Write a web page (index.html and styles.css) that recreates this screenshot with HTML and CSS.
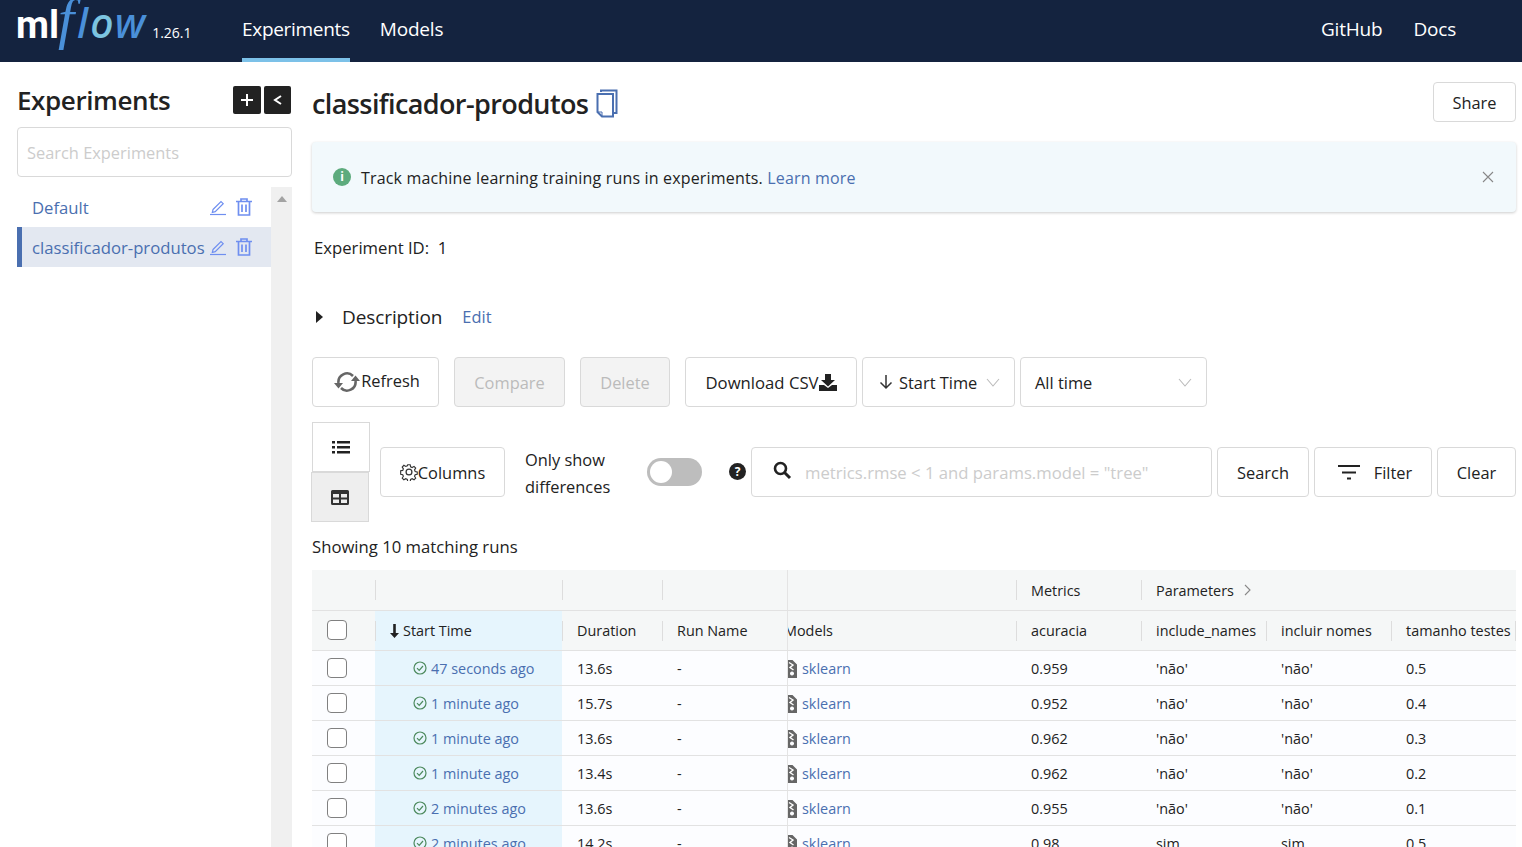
FILE: index.html
```html
<!DOCTYPE html>
<html lang="en">
<head>
    <meta charset="UTF-8">
    <title>MLflow Experiments</title>
    <link rel="stylesheet" href="styles.css">
</head>
<body>
    <header class="topbar">
        <div class="logo">
            <span class="logo-ml">ml</span><span class="logo-f">f</span><span class="logo-low">l<span class="logo-o">o</span>w</span>
            <span class="logo-version">1.26.1</span>
        </div>
        <nav class="nav-left">
            <a class="nav-link active">Experiments</a>
            <a class="nav-link">Models</a>
        </nav>
        <nav class="nav-right">
            <a class="nav-link">GitHub</a>
            <a class="nav-link">Docs</a>
        </nav>
    </header>

    <div class="page">
        <aside class="sidebar">
            <div class="side-head">
                <h2>Experiments</h2>
                <div class="side-btns">
                    <span class="dark-btn">
                        <svg width="14" height="14" viewBox="0 0 14 14"><path d="M7 1v12M1 7h12" stroke="#fff" stroke-width="2"/></svg>
                    </span>
                    <span class="dark-btn">
                        <svg width="12" height="12" viewBox="0 0 12 12"><path d="M9 2 3 6l6 4" stroke="#fff" stroke-width="2" fill="none"/></svg>
                    </span>
                </div>
            </div>
            <div class="side-search">Search Experiments</div>
            <div class="side-body">
                <ul class="exp-list">
                    <li class="exp-item">
                        <span class="exp-name">Default</span>
                        <svg class="exp-icon" width="16" height="18" viewBox="0 0 16 18"><path d="M3 11.500 11 3.500l2.200 2.200-8 8-2.900.700z" fill="none" stroke="#6f8ff0" stroke-width="1.200"/><path d="M0 16.500h16" stroke="#6f8ff0" stroke-width="1.200"/></svg>
                        <svg class="exp-icon" width="16" height="18" viewBox="0 0 16 18"><path d="M0 3.500h16M5 3.500V1h6v2.500M2.500 3.500V17h11V3.500M6 6.500v7.500M10 6.500v7.500" fill="none" stroke="#6f8ff0" stroke-width="1.700"/></svg>
                    </li>
                    <li class="exp-item selected">
                        <span class="exp-name">classificador-produtos</span>
                        <svg class="exp-icon" width="16" height="18" viewBox="0 0 16 18"><path d="M3 11.500 11 3.500l2.200 2.200-8 8-2.900.700z" fill="none" stroke="#6f8ff0" stroke-width="1.200"/><path d="M0 16.500h16" stroke="#6f8ff0" stroke-width="1.200"/></svg>
                        <svg class="exp-icon" width="16" height="18" viewBox="0 0 16 18"><path d="M0 3.500h16M5 3.500V1h6v2.500M2.500 3.500V17h11V3.500M6 6.500v7.500M10 6.500v7.500" fill="none" stroke="#6f8ff0" stroke-width="1.700"/></svg>
                    </li>
                </ul>
                <div class="scroll-track"><span class="scroll-up"></span></div>
            </div>
        </aside>

        <main class="content">
            <div class="title-row">
                <h1>classificador-produtos</h1>
                <svg class="copy-icon" width="22" height="29" viewBox="0 0 22 29"><path d="M5 3V1.500h15.500V24H18M1.500 5H17v22.500H6L1.500 23z" fill="none" stroke="#4a6fb0" stroke-width="2"/><path d="M1.500 23H6v4.500" fill="none" stroke="#4a6fb0" stroke-width="1"/></svg>
                <button class="btn share-btn">Share</button>
            </div>

            <div class="alert">
                <span class="alert-dot">i</span>
                <span class="alert-text">Track machine learning training runs in experiments. <a class="link">Learn more</a></span>
                <svg class="alert-close" width="12" height="12" viewBox="0 0 12 12"><path d="M1 1l10 10M11 1 1 11" stroke="#888" stroke-width="1.100"/></svg>
            </div>

            <p class="exp-id">Experiment ID:&nbsp; 1</p>

            <div class="desc-row">
                <span class="caret"></span>
                <span class="desc-label">Description</span>
                <a class="link">Edit</a>
            </div>

            <div class="btn-row">
                <button class="btn refresh-btn">
                    <svg width="26" height="22" viewBox="0 0 26 22"><path d="M4.500 12A8.500 8.500 0 0 1 19 5M21.500 10A8.500 8.500 0 0 1 7 17" fill="none" stroke="#666" stroke-width="2.600"/><path d="M0 12h9l-4.500 5.500zM17 10h9l-4.500-5.500z" fill="#666"/></svg>
                    <span class="refresh-text">Refresh</span>
                </button>
                <button class="btn disabled compare-btn">Compare</button>
                <button class="btn disabled delete-btn">Delete</button>
                <button class="btn csv-btn">Download CSV<svg width="18" height="17" viewBox="0 0 18 17"><path d="M6 0h6v6h4l-7 6.500L2 6h4z" fill="#222"/><path d="M0 11h5l4 3 4-3h5v6H0z" fill="#222"/></svg></button>
                <div class="select sort-select">
                    <svg width="14" height="16" viewBox="0 0 14 16"><path d="M7 1v13M1.500 8.500 7 14l5.500-5.500" fill="none" stroke="#333" stroke-width="1.500"/></svg>
                    <span>Start Time</span>
                    <svg class="chev" width="14" height="9" viewBox="0 0 14 9"><path d="M1 1l6 7 6-7" fill="none" stroke="#bbb" stroke-width="1.100"/></svg>
                </div>
                <div class="select time-select">
                    <span>All time</span>
                    <svg class="chev" width="14" height="9" viewBox="0 0 14 9"><path d="M1 1l6 7 6-7" fill="none" stroke="#bbb" stroke-width="1.100"/></svg>
                </div>
            </div>

            <div class="tool-row">
                <div class="view-toggle">
                    <span class="view-btn">
                        <svg width="18" height="14" viewBox="0 0 18 14"><path d="M0 1h3v2.400H0zM5 1h13v2.400H5zM0 6h3v2.400H0zM5 6h13v2.400H5zM0 11h3v2.400H0zM5 11h13v2.400H5z" fill="#222"/></svg>
                    </span>
                    <span class="view-btn active">
                        <svg width="18" height="15" viewBox="0 0 18 15"><path fill-rule="evenodd" d="M1.500 0h15A1.500 1.500 0 0 1 18 1.500v12a1.500 1.500 0 0 1-1.500 1.500h-15A1.500 1.500 0 0 1 0 13.500v-12A1.500 1.500 0 0 1 1.500 0zM2 4v3.500h6V4zM10 4v3.500h6V4zM2 9.500V13h6V9.500zM10 9.500V13h6V9.500z" fill="#333"/></svg>
                    </span>
                </div>
                <button class="btn columns-btn">
                    <svg width="18" height="18" viewBox="0 0 16 16"><circle cx="8" cy="8" r="2.600" fill="none" stroke="#333" stroke-width="1.100"/><path d="M6.800 1h2.400l.4 2 1.500.7 1.800-1.100 1.600 1.700-1.100 1.700.6 1.500 2 .4v2.400l-2 .4-.6 1.500 1.100 1.700-1.600 1.700-1.800-1.100-1.500.7-.4 2H6.800l-.4-2-1.500-.7-1.800 1.100-1.600-1.700 1.100-1.700-.6-1.500-2-.4V6.900l2-.4.600-1.500-1.100-1.700 1.600-1.700 1.800 1.100 1.500-.7z" transform="translate(.6 .6) scale(.92)" fill="none" stroke="#333" stroke-width="1.100"/></svg>Columns
                </button>
                <div class="diff-label">Only show differences</div>
                <div class="switch"><span class="knob"></span></div>
                <span class="help">?</span>
                <div class="search-box">
                    <svg width="19" height="19" viewBox="0 0 19 19"><circle cx="7.500" cy="7.500" r="5.500" fill="none" stroke="#222" stroke-width="2.600"/><path d="M11.500 11.500 17 17" stroke="#222" stroke-width="3"/></svg>
                    <span class="placeholder">metrics.rmse &lt; 1 and params.model = "tree"</span>
                </div>
                <button class="btn search-btn">Search</button>
                <button class="btn filter-btn">
                    <svg width="22" height="15" viewBox="0 0 22 15"><path d="M0 1h22M4 7.500h14M9 13.500h4" stroke="#222" stroke-width="2.200"/></svg>Filter
                </button>
                <button class="btn clear-btn">Clear</button>
            </div>

            <p class="showing">Showing 10 matching runs</p>

            <div class="runs">
                <div class="row head-top">
                    <div class="cell"></div>
                    <div class="cell sep"></div>
                    <div class="cell sep"></div>
                    <div class="cell sep"></div>
                    <div class="cell pinned"></div>
                    <div class="cell sep">Metrics</div>
                    <div class="cell sep">Parameters <svg class="param-chev" width="8" height="12" viewBox="0 0 8 12"><path d="M1 1l5 5-5 5" fill="none" stroke="#888" stroke-width="1.100"/></svg></div>
                </div>
                <div class="row head-bottom">
                    <div class="cell check-cell"><span class="check"></span></div>
                    <div class="cell sep sorted"><svg width="9" height="14" viewBox="0 0 9 14"><path d="M3.200 0h2.600v9H9l-4.500 5L0 9h3.200z" fill="#222"/></svg>Start Time</div>
                    <div class="cell sep">Duration</div>
                    <div class="cell sep">Run Name</div>
                    <div class="cell pinned"><span class="clipped">Models</span></div>
                    <div class="cell sep">acuracia</div>
                    <div class="cell sep">include_names</div>
                    <div class="cell sep">incluir nomes</div>
                    <div class="cell sep endsep">tamanho testes</div>
                </div>
                <div id="runRows"></div>
            </div>
        </main>
    </div>

    <script>
        // Runs shown in the table
        const runs = [
            ['47 seconds ago', '13.6s', '0.959', "'não'", "'não'", '0.5'],
            ['1 minute ago', '15.7s', '0.952', "'não'", "'não'", '0.4'],
            ['1 minute ago', '13.6s', '0.962', "'não'", "'não'", '0.3'],
            ['1 minute ago', '13.4s', '0.962', "'não'", "'não'", '0.2'],
            ['2 minutes ago', '13.6s', '0.955', "'não'", "'não'", '0.1'],
            ['2 minutes ago', '14.2s', '0.98', 'sim', 'sim', '0.5']
        ];

        const checkIcon = '<svg width="14" height="14" viewBox="0 0 14 14"><circle cx="7" cy="7" r="6" fill="none" stroke="#4d8a5e" stroke-width="1.200"/><path d="M4 7.200 6.200 9.400 10 5" fill="none" stroke="#4d8a5e" stroke-width="1.200"/></svg>';
        const modelIcon = '<svg class="model-icon" width="10" height="19" viewBox="0 0 10 19"><path fill-rule="evenodd" d="M0 1h5.500L10 5.500V19H0zM5 12.500a2 2 0 1 0 .01 0z" fill="#666"/><path d="M2 3.500 6 6 3 8.500 6.500 11" fill="none" stroke="#fff" stroke-width="1.400"/></svg>';

        const holder = document.getElementById('runRows');
        runs.forEach(run => {
            const row = document.createElement('div');
            row.className = 'row data';
            row.innerHTML =
                '<div class="cell check-cell"><span class="check"></span></div>' +
                `<div class="cell time">${checkIcon}<a class="link">${run[0]}</a></div>` +
                `<div class="cell">${run[1]}</div>` +
                '<div class="cell">-</div>' +
                `<div class="cell pinned model">${modelIcon}<a class="link">sklearn</a></div>` +
                `<div class="cell">${run[2]}</div>` +
                `<div class="cell">${run[3]}</div>` +
                `<div class="cell">${run[4]}</div>` +
                `<div class="cell">${run[5]}</div>`;
            holder.appendChild(row);
        });
    </script>
</body>
</html>
```

FILE: styles.css
```css
* {
    box-sizing: border-box;
}

html, body {
    height: 847px;
    overflow: hidden;
}

body {
    margin: 0;
    font-family: 'Open Sans', 'Noto Sans', sans-serif;
    font-size: 16.4px;
    color: #222;
    background-color: #fff;
}

/* top bar */
.topbar {
    height: 62px;
    background-color: #14233f;
    display: flex;
    color: #fff;
    padding-left: 16px;
}

.logo {
    width: 226px;
    display: flex;
    align-items: baseline;
    height: 62px;
    line-height: 38px;
}

.logo-ml {
    font-family: 'Roboto', sans-serif;
    font-size: 38px;
    font-weight: 700;
}

.logo-f {
    font-family: 'Liberation Serif', serif;
    font-style: italic;
    font-size: 58px;
    color: #4a90d9;
    margin-left: -1px;
}

.logo-low {
    font-family: 'Noto Sans', sans-serif;
    font-style: italic;
    font-weight: 500;
    font-size: 41px;
    letter-spacing: 2px;
    color: #4a90d9;
    margin-left: 3px;
}

.logo-o {
    color: #7cc4e0;
}

.logo-version {
    font-size: 14px;
    margin-left: 5px;
}

.nav-left, .nav-right {
    display: flex;
    gap: 30px;
}

.nav-right {
    margin-left: auto;
    padding-right: 66px;
    gap: 31px;
}

.nav-link {
    font-size: 19px;
    letter-spacing: -0.2px;
    line-height: 58px;
    height: 62px;
    color: #fff;
}

.nav-link.active {
    border-bottom: 4px solid #7cc1e8;
    letter-spacing: -0.3px;
}

/* page layout */
.page {
    display: flex;
    padding-left: 17px;
    padding-right: 6px;
}

.sidebar {
    width: 275px;
    flex-shrink: 0;
    margin-right: 20px;
}

.side-head {
    display: flex;
    justify-content: space-between;
    height: 65px;
    padding-top: 24px;
}

.side-head h2 {
    margin: -1px 0 0;
    font-size: 26px;
    font-weight: 600;
    line-height: 30px;
    letter-spacing: -0.4px;
}

.side-btns {
    display: flex;
    gap: 3px;
}

.dark-btn {
    width: 28px;
    height: 28px;
    background-color: #222;
    border-radius: 2px;
    display: flex;
    align-items: center;
    justify-content: center;
}

.dark-btn:last-child {
    width: 27px;
    margin-right: 1px;
}

.side-search {
    height: 50px;
    border: 1px solid #d9d9d9;
    border-radius: 4px;
    color: #ccc;
    padding: 0 9px;
    line-height: 50px;
}

.side-body {
    display: flex;
    margin-top: 10px;
    height: 660px;
}

.exp-list {
    list-style: none;
    margin: 0;
    padding: 0;
    width: 254px;
}

.exp-item {
    height: 40px;
    display: flex;
    align-items: center;
    padding-left: 15px;
    padding-right: 19px;
    color: #4a6fb0;
    font-size: 16.7px;
}

.exp-item.selected {
    background-color: #e3e8f1;
    border-left: 5px solid #4a6fb0;
    padding-left: 10px;
}

.exp-name {
    flex: 1 0 0;
    width: 0;
    white-space: nowrap;
    padding-top: 1px;
}

.exp-icon {
    margin-left: 10px;
}

.scroll-track {
    width: 21px;
    background-color: #f0f0f0;
    display: flex;
    justify-content: center;
    padding-top: 9px;
}

.scroll-up {
    width: 0;
    height: 0;
    border-left: 5px solid transparent;
    border-right: 5px solid transparent;
    border-bottom: 6px solid #a3a3a3;
}

/* main area */
.content {
    flex-grow: 1;
    min-width: 0;
}

.title-row {
    display: flex;
    align-items: center;
    height: 80px;
}

.title-row h1 {
    margin: 2px 0 0;
    font-size: 27px;
    font-weight: 600;
    letter-spacing: -0.6px;
}

.copy-icon {
    margin: 2px 0 0 8px;
}

.btn {
    height: 50px;
    background-color: #fff;
    border: 1px solid #d9d9d9;
    border-radius: 4px;
    font: inherit;
    color: #222;
    display: flex;
    align-items: center;
    justify-content: center;
    padding: 0;
}

.share-btn {
    margin-left: auto;
    width: 83px;
    height: 40px;
}

.alert {
    height: 70px;
    background-color: #f2f9fc;
    border-radius: 4px;
    box-shadow: 0 1px 3px rgba(0, 0, 0, 0.2);
    display: flex;
    align-items: center;
    padding: 0 22px 0 21px;
}

.alert-dot {
    width: 18px;
    height: 18px;
    border-radius: 50%;
    background-color: #5dab7d;
    color: #fff;
    font-size: 12px;
    font-weight: 700;
    text-align: center;
    line-height: 18px;
    margin-right: 10px;
}

.alert-text {
    font-size: 16px;
    letter-spacing: 0.17px;
    padding-top: 2px;
}

.alert-close {
    margin-left: auto;
}

.link {
    color: #4a6fb0;
}

.exp-id {
    margin: 0;
    height: 73px;
    padding: 24px 0 0 2px;
    line-height: 24px;
    font-size: 16.7px;
}

.desc-row {
    height: 72px;
    display: flex;
    padding-top: 18px;
    line-height: 28px;
    align-items: flex-start;
}

.caret {
    width: 0;
    height: 0;
    margin: 8px 0 0 4px;
    border-top: 6px solid transparent;
    border-bottom: 6px solid transparent;
    border-left: 7px solid #222;
}

.desc-label {
    font-size: 19px;
    margin: 0 20px 0 19px;
    letter-spacing: -0.1px;
}

.btn-row {
    display: flex;
    height: 65px;
}

.refresh-btn {
    width: 127px;
    margin-right: 15px;
    padding-left: 3px;
    gap: 1px;
}

.refresh-text {
    margin-top: -3px;
}

.disabled {
    background-color: #f3f3f3;
    color: #bbb;
}

.compare-btn {
    width: 111px;
    margin-right: 15px;
}

.delete-btn {
    width: 90px;
    margin-right: 15px;
}

.csv-btn {
    width: 172px;
    margin-right: 5px;
    font-size: 16.7px;
}

.select {
    height: 50px;
    border: 1px solid #d9d9d9;
    border-radius: 4px;
    display: flex;
    align-items: center;
}

.sort-select {
    width: 153px;
    margin-right: 5px;
    padding-left: 16px;
    gap: 6px;
}

.time-select {
    width: 187px;
    padding-left: 14px;
}

.chev {
    margin-left: auto;
    margin-right: 14px;
}

.tool-row {
    display: flex;
    height: 100px;
}

.view-toggle {
    width: 68px;
    flex-shrink: 0;
}

.view-btn {
    display: flex;
    align-items: center;
    justify-content: center;
    width: 58px;
    height: 50px;
    border: 1px solid #d9d9d9;
    background-color: #fff;
}

.view-btn.active {
    background-color: #eee;
    margin-left: -1px;
}

.columns-btn {
    width: 125px;
    margin-top: 25px;
}

.diff-label {
    width: 122px;
    margin: 24px 0 0 20px;
    line-height: 27px;
    height: 50px;
    flex-shrink: 0;
}

.switch {
    width: 55px;
    height: 28px;
    background-color: #bdbdbd;
    border-radius: 14px;
    margin-top: 36px;
    padding: 3px;
    flex-shrink: 0;
}

.knob {
    display: block;
    width: 22px;
    height: 22px;
    border-radius: 50%;
    background-color: #fff;
}

.help {
    width: 17px;
    height: 17px;
    border-radius: 50%;
    background-color: #222;
    color: #fff;
    font-size: 12px;
    font-weight: 700;
    text-align: center;
    line-height: 17px;
    margin: 41px 5px 0 27px;
    flex-shrink: 0;
}

.search-box {
    width: 461px;
    height: 50px;
    margin-top: 25px;
    border: 1px solid #d9d9d9;
    border-radius: 4px;
    display: flex;
    align-items: center;
    padding-left: 21px;
    gap: 13px;
}

.search-box svg {
    margin-top: -4px;
}

.placeholder {
    color: #ccc;
    font-size: 16.7px;
}

.search-btn {
    width: 92px;
    margin: 25px 0 0 5px;
}

.filter-btn {
    width: 118px;
    margin: 25px 0 0 5px;
    padding-left: 4px;
    gap: 14px;
}

.clear-btn {
    width: 79px;
    margin: 25px 0 0 5px;
}

.showing {
    margin: 0;
    height: 48px;
    line-height: 50px;
    font-size: 16.7px;
}

/* runs table */
.runs {
    font-size: 14.4px;
}

.row {
    display: grid;
    grid-template-columns: 63px 187px 100px 125px 229px 125px 125px 125px 125px;
    background-color: #f5f7f7;
    border-bottom: 1px solid #e2e2e2;
    color: #222;
}

.head-top {
    height: 41px;
    grid-template-columns: 63px 187px 100px 125px 229px 125px 375px;
}

.head-bottom {
    height: 40px;
    font-weight: 500;
}

.data {
    height: 35px;
    background-color: #fcfdff;
}

.cell {
    display: flex;
    align-items: center;
    padding-left: 15px;
    position: relative;
    white-space: nowrap;
    overflow: hidden;
}

.sep::before {
    content: '';
    position: absolute;
    left: 0;
    top: 10px;
    height: 20px;
    width: 1px;
    background-color: #ddd;
}

.endsep::after {
    content: '';
    position: absolute;
    right: 0;
    top: 10px;
    height: 20px;
    width: 1px;
    background-color: #ddd;
}

.pinned {
    border-left: 1px solid #e4e4e4;
    padding-left: 0;
}

.clipped {
    margin-left: -4px;
}

.check-cell {
    padding-left: 15px;
}

.check {
    width: 20px;
    height: 20px;
    margin-top: -1px;
    border: 1px solid #808080;
    border-radius: 4px;
    background-color: #fff;
}

.sorted {
    background-color: #e6f5fd;
    gap: 4px;
}

.time {
    background-color: #e6f5fd;
    padding-left: 38px;
    gap: 4px;
}

.param-chev {
    margin-left: 10px;
}

.model {
    gap: 5px;
}

.model-icon {
    flex-shrink: 0;
    margin-left: -1px;
}
```
